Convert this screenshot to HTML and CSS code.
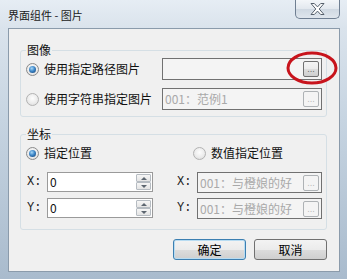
FILE: index.html
```html
<!DOCTYPE html>
<html>
<head>
<meta charset="utf-8">
<title>界面组件 - 图片</title>
<link rel="stylesheet" href="styles.css">
</head>
<body>
<div class="window">
	<div class="titlebar">
		<span class="title">界面组件 - 图片</span>
		<span class="close">
			<svg width="15" height="12" viewBox="0 0 15 12"><polygon points="1,0.5 4.3,0.5 7.5,3.9 10.7,0.5 14,0.5 9.2,6 14,11.5 10.7,11.5 7.5,8.1 4.3,11.5 1,11.5 5.8,6" fill="#fff" stroke="#56606c" stroke-width="1" stroke-linejoin="round"/></svg>
		</span>
	</div>
	<div class="client">
		<fieldset class="group group-image">
			<legend>图像</legend>
			<div class="row">
				<label class="opt"><span class="radio checked"></span>使用指定路径图片</label>
				<div class="field"><span class="value"></span><span class="browse">...</span></div>
			</div>
			<div class="row">
				<label class="opt"><span class="radio"></span>使用字符串指定图片</label>
				<div class="field"><span class="value">001：范例1</span><span class="browse off">...</span></div>
			</div>
		</fieldset>
		<fieldset class="group group-pos">
			<legend>坐标</legend>
			<div class="cols">
				<div class="col col-left">
					<label class="opt"><span class="radio checked"></span>指定位置</label>
					<div class="coord">
						<span class="axis">X:</span>
						<div class="spin"><span class="num">0</span><span class="arrows"><i class="up"></i><i class="down"></i></span></div>
					</div>
					<div class="coord">
						<span class="axis">Y:</span>
						<div class="spin"><span class="num">0</span><span class="arrows"><i class="up"></i><i class="down"></i></span></div>
					</div>
				</div>
				<div class="col col-right">
					<label class="opt"><span class="radio"></span>数值指定位置</label>
					<div class="coord">
						<span class="axis">X:</span>
						<div class="field"><span class="value">001：与橙娘的好</span><span class="browse off">...</span></div>
					</div>
					<div class="coord">
						<span class="axis">Y:</span>
						<div class="field"><span class="value">001：与橙娘的好</span><span class="browse off">...</span></div>
					</div>
				</div>
			</div>
		</fieldset>
		<div class="buttons">
			<button class="btn default">确定</button>
			<button class="btn">取消</button>
		</div>
	</div>
	<svg class="mark" width="347" height="279"><ellipse cx="312" cy="68" rx="24" ry="15" fill="none" stroke="#c8141c" stroke-width="3"/></svg>
</div>
</body>
</html>
```

FILE: styles.css
```css
* {
	font-family: "Noto Sans CJK SC", "Noto Sans", sans-serif;
	font-size: 12px;
}
body {
	margin: 0;
	background: #fff;
}
.window {
	position: relative;
	width: 347px;
	height: 279px;
	display: flex;
	flex-direction: column;
	background: linear-gradient(180deg, #e6edf4 0, #dae3ec 28px, #c6d4e1 120px, #a9bbcd 279px);
	overflow: hidden;
}
.titlebar {
	height: 28px;
	display: flex;
	align-items: flex-start;
	padding-left: 8px;
	flex: none;
}
.title {
	font-size: 11px;
	line-height: 11px;
	margin-top: 10px;
	color: #1a1a1a;
}
.close {
	margin-left: auto;
	margin-right: 7px;
	width: 45px;
	height: 19px;
	box-sizing: border-box;
	border: 1px solid #6f7f92;
	border-top: none;
	border-radius: 0 0 5px 5px;
	background: linear-gradient(#f3f6f9, #e2e8ee 50%, #cfd8e2 51%, #dfe6ed);
	display: flex;
	align-items: center;
	justify-content: center;
}
.client {
	margin: 0 7px 7px 8px;
	height: 244px;
	box-sizing: border-box;
	border: 1px solid #8b9bab;
	background: #f0f0f0;
	padding: 14px 12px 0 11px;
}
.group {
	margin: 0;
	min-width: 0;
	border: 1px solid #d5dfe5;
	border-radius: 3px;
	padding: 1px 4px 6px 5px;
}
.group legend {
	padding: 0 1px;
	line-height: 14px;
	color: #111;
}
.group-pos {
	margin-top: 10px;
	padding: 4px 4px 10px 5px;
}
.row {
	display: flex;
	align-items: center;
	justify-content: space-between;
	height: 22px;
}
.row + .row {
	margin-top: 8px;
}
.opt {
	display: flex;
	align-items: center;
	gap: 5px;
	height: 16px;
	line-height: 16px;
	color: #111;
}
.radio {
	position: relative;
	flex: none;
	width: 13px;
	height: 13px;
	box-sizing: border-box;
	border-radius: 50%;
	border: 1px solid #b2b2b2;
	background: radial-gradient(circle at 50% 40%, #fdfdfd 0, #ececec 55%, #d6d6d6 100%);
}
.radio.checked {
	border-color: #8a8a8a;
}
.radio.checked::after {
	content: "";
	position: absolute;
	left: 2px;
	top: 2px;
	width: 7px;
	height: 7px;
	border-radius: 50%;
	background: radial-gradient(circle at 40% 35%, #a8d8f7 0, #3d87c9 45%, #113a6a 100%);
}
.field {
	width: 160px;
	height: 22px;
	box-sizing: border-box;
	border: 1px solid #717171;
	background: #f4f4f4;
	display: flex;
	align-items: center;
	justify-content: space-between;
	padding: 0 2px 0 2px;
	color: #a9a9a9;
	line-height: 16px;
}
.browse {
	flex: none;
	width: 16px;
	height: 16px;
	box-sizing: border-box;
	border: 1px solid #707070;
	border-radius: 2px;
	background: linear-gradient(#f4f4f4, #ebebeb 50%, #dddddd 51%, #cfcfcf);
	font-family: "DejaVu Sans", sans-serif;
	font-size: 8px;
	line-height: 16px;
	text-align: center;
	color: #666;
}
.browse.off {
	border-color: #aeb2b5;
	background: #f4f4f4;
	color: #b4b4b4;
}
.cols {
	display: flex;
}
.col {
	display: flex;
	flex-direction: column;
}
.col-left {
	width: 150px;
}
.col-right {
	width: 146px;
}
.col-right .opt {
	padding-left: 17px;
}
.coord {
	display: flex;
	align-items: flex-start;
	height: 21px;
	margin-top: 5px;
}
.opt + .coord {
	margin-top: 11px;
}
.axis {
	width: 21px;
	padding-left: 1px;
	box-sizing: border-box;
	font-family: "Liberation Mono", monospace;
	line-height: 20px;
	color: #222;
}
.spin {
	width: 106px;
	height: 20px;
	box-sizing: border-box;
	border: 1px solid #9a9a9a;
	background: #fff;
	display: flex;
	align-items: stretch;
}
.num {
	padding-left: 2px;
	line-height: 17px;
	color: #111;
}
.arrows {
	margin: 1px 1px 1px auto;
	width: 15px;
	display: flex;
	flex-direction: column;
	gap: 0;
}
.arrows i {
	position: relative;
	flex: 1;
	box-sizing: border-box;
	border: 1px solid #b6bcc2;
	border-radius: 1px;
	background: linear-gradient(#f6f6f6, #e4e4e4);
}
.arrows i::after {
	content: "";
	position: absolute;
	left: 4px;
	top: 2px;
	border-left: 3px solid transparent;
	border-right: 3px solid transparent;
}
.arrows .up::after {
	border-bottom: 3px solid #5d6670;
}
.arrows .down::after {
	border-top: 3px solid #5d6670;
}
.col-right .field {
	width: 125px;
	height: 21px;
}
.buttons {
	display: flex;
	justify-content: flex-end;
	gap: 8px;
	margin-top: 9px;
}
.btn {
	width: 73px;
	height: 21px;
	padding: 0;
	border: 1px solid #707070;
	border-radius: 3px;
	background: linear-gradient(#f3f3f3, #ebebeb 50%, #dddddd 51%, #cfcfcf);
	line-height: 18px;
	color: #000;
}
.btn.default {
	border-color: #3c7fb1;
	box-shadow: inset 0 0 0 1px #b8dcf2;
}
.mark {
	position: absolute;
	left: 0;
	top: 0;
	pointer-events: none;
}
```
